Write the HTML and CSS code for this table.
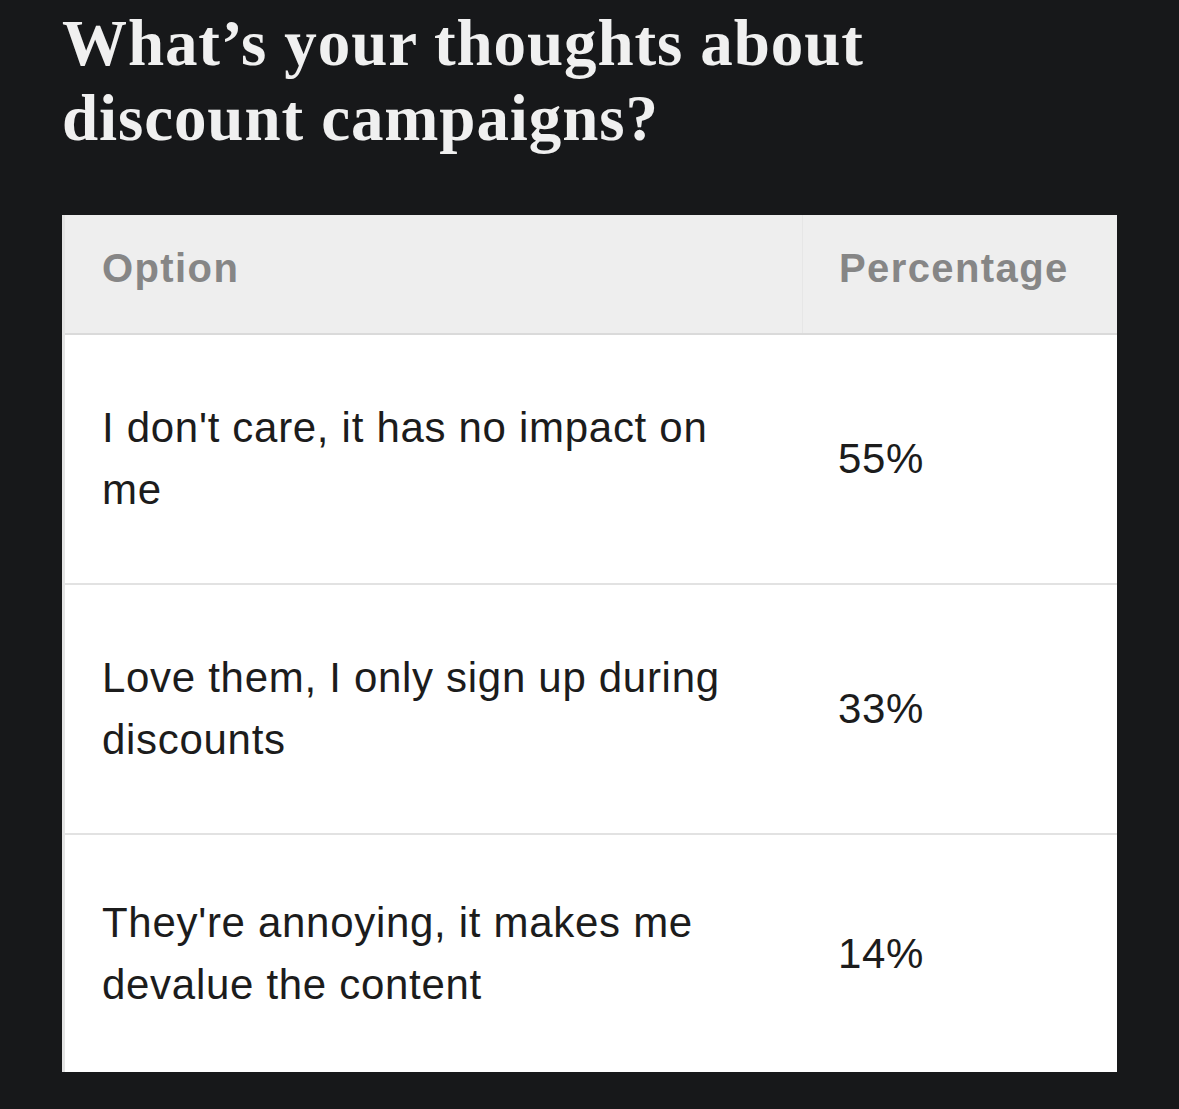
FILE: index.html
```html
<!DOCTYPE html>
<html>
<head>
<meta charset="utf-8">
<link rel="stylesheet" href="styles.css">
</head>
<body>
<div class="page">
  <h1 class="title">What’s your thoughts about<br>discount campaigns?</h1>
  <div class="poll">
    <div class="row head">
      <div class="opt">Option</div>
      <div class="pct">Percentage</div>
    </div>
    <div class="row">
      <div class="opt">I don't care, it has no impact on me</div>
      <div class="pct">55%</div>
    </div>
    <div class="row">
      <div class="opt">Love them, I only sign up during discounts</div>
      <div class="pct">33%</div>
    </div>
    <div class="row last">
      <div class="opt">They're annoying, it makes me devalue the content</div>
      <div class="pct">14%</div>
    </div>
  </div>
</div>
</body>
</html>
```
FILE: styles.css
```css
html, body {
  margin: 0;
  padding: 0;
  background: #17181a;
}
.page {
  padding: 6px 62px 0 62px;
  width: 1055px;
}
.title {
  margin: 0;
  font-family: "Liberation Serif", "DejaVu Serif", serif;
  font-weight: bold;
  font-size: 65px;
  line-height: 75px;
  letter-spacing: 0.9px;
  color: #f0f0f0;
}
.poll {
  margin-top: 59px;
  width: 1052px;
  background: #fff;
  border-left: 3px solid #e4e4e4;
  font-family: "Liberation Sans", Arial, sans-serif;
}
.row {
  display: flex;
  height: 248px;
  border-bottom: 2px solid #e2e2e2;
  color: #1c1c1c;
  font-size: 42px;
  line-height: 62px;
  letter-spacing: 0.7px;
}
.row.last {
  height: 237px;
  border-bottom: none;
}
.row .opt {
  width: 640px;
  padding: 0 60px 0 37px;
  display: flex;
  align-items: center;
}
.row .pct {
  flex: 1;
  padding-left: 36px;
  display: flex;
  align-items: center;
}
.row.head {
  height: 118px;
  background: #eeeeee;
  border-bottom: 2px solid #dadada;
  color: #868686;
  font-size: 40px;
  font-weight: bold;
  letter-spacing: 1.4px;
  line-height: normal;
}
.row.head .opt,
.row.head .pct {
  padding-bottom: 12px;
}
.row.head .opt {
  border-right: 1px solid #e6e6e6;
}
```
